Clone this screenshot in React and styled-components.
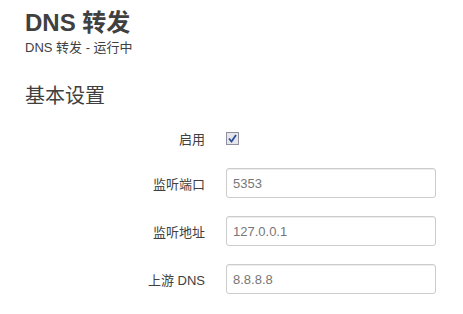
import React from 'react';
import styled, { createGlobalStyle } from 'styled-components';

const GlobalStyle = createGlobalStyle`
  body {
    margin: 0;
    background: #fff;
    font-family: "Liberation Sans", "Noto Sans CJK SC", sans-serif;
    color: #404040;
  }
`;

const Page = styled.div`
  padding: 8px 0 0 25px;
  width: 463px;
  box-sizing: border-box;
`;

const Title = styled.h2`
  margin: 0;
  font-size: 24px;
  font-weight: bold;
  line-height: 30px;
  color: #404040;
`;

const Subtitle = styled.div`
  font-size: 13px;
  line-height: 16px;
  margin-top: 2px;
  color: #404040;
`;

const SectionTitle = styled.h3`
  margin: 27px 0 0;
  font-size: 20px;
  font-weight: normal;
  line-height: 26px;
  color: #404040;
`;

const Form = styled.div`
  margin-top: 17px;
  display: flex;
  flex-direction: column;
  gap: 18px;
`;

const Row = styled.div`
  display: grid;
  grid-template-columns: 180px 210px;
  column-gap: 21px;
  align-items: center;
  height: ${(p) => (p.$short ? '24px' : '30px')};
`;

const Label = styled.label`
  text-align: right;
  font-size: 13px;
  color: #404040;
`;

const Input = styled.input`
  box-sizing: border-box;
  width: 210px;
  height: 30px;
  padding: 0 6px;
  border: 1px solid #ccc;
  border-radius: 3px;
  box-shadow: inset 0 1px 1px rgba(0, 0, 0, 0.075);
  font-family: "Liberation Sans", sans-serif;
  font-size: 13px;
  color: #777;
  outline: none;
`;

const Check = styled.span`
  display: inline-flex;
  align-items: center;
  justify-content: center;
  width: 11px;
  height: 11px;
  border: 1px solid #8f8f9d;
  background: #e6e6ea;
`;

export default function App() {
  return (
    <Page>
      <GlobalStyle />
      <Title>DNS 转发</Title>
      <Subtitle>DNS 转发 - 运行中</Subtitle>
      <SectionTitle>基本设置</SectionTitle>
      <Form>
        <Row $short>
          <Label>启用</Label>
          <div>
            <Check>
              <svg width="9" height="9" viewBox="0 0 9 9">
                <path d="M1 4.5 L3.5 7.5 L8 1" fill="none" stroke="#2a4d9c" strokeWidth="1.8" />
              </svg>
            </Check>
          </div>
        </Row>
        <Row>
          <Label>监听端口</Label>
          <Input defaultValue="5353" />
        </Row>
        <Row>
          <Label>监听地址</Label>
          <Input defaultValue="127.0.0.1" />
        </Row>
        <Row>
          <Label>上游 DNS</Label>
          <Input defaultValue="8.8.8.8" />
        </Row>
      </Form>
    </Page>
  );
}
